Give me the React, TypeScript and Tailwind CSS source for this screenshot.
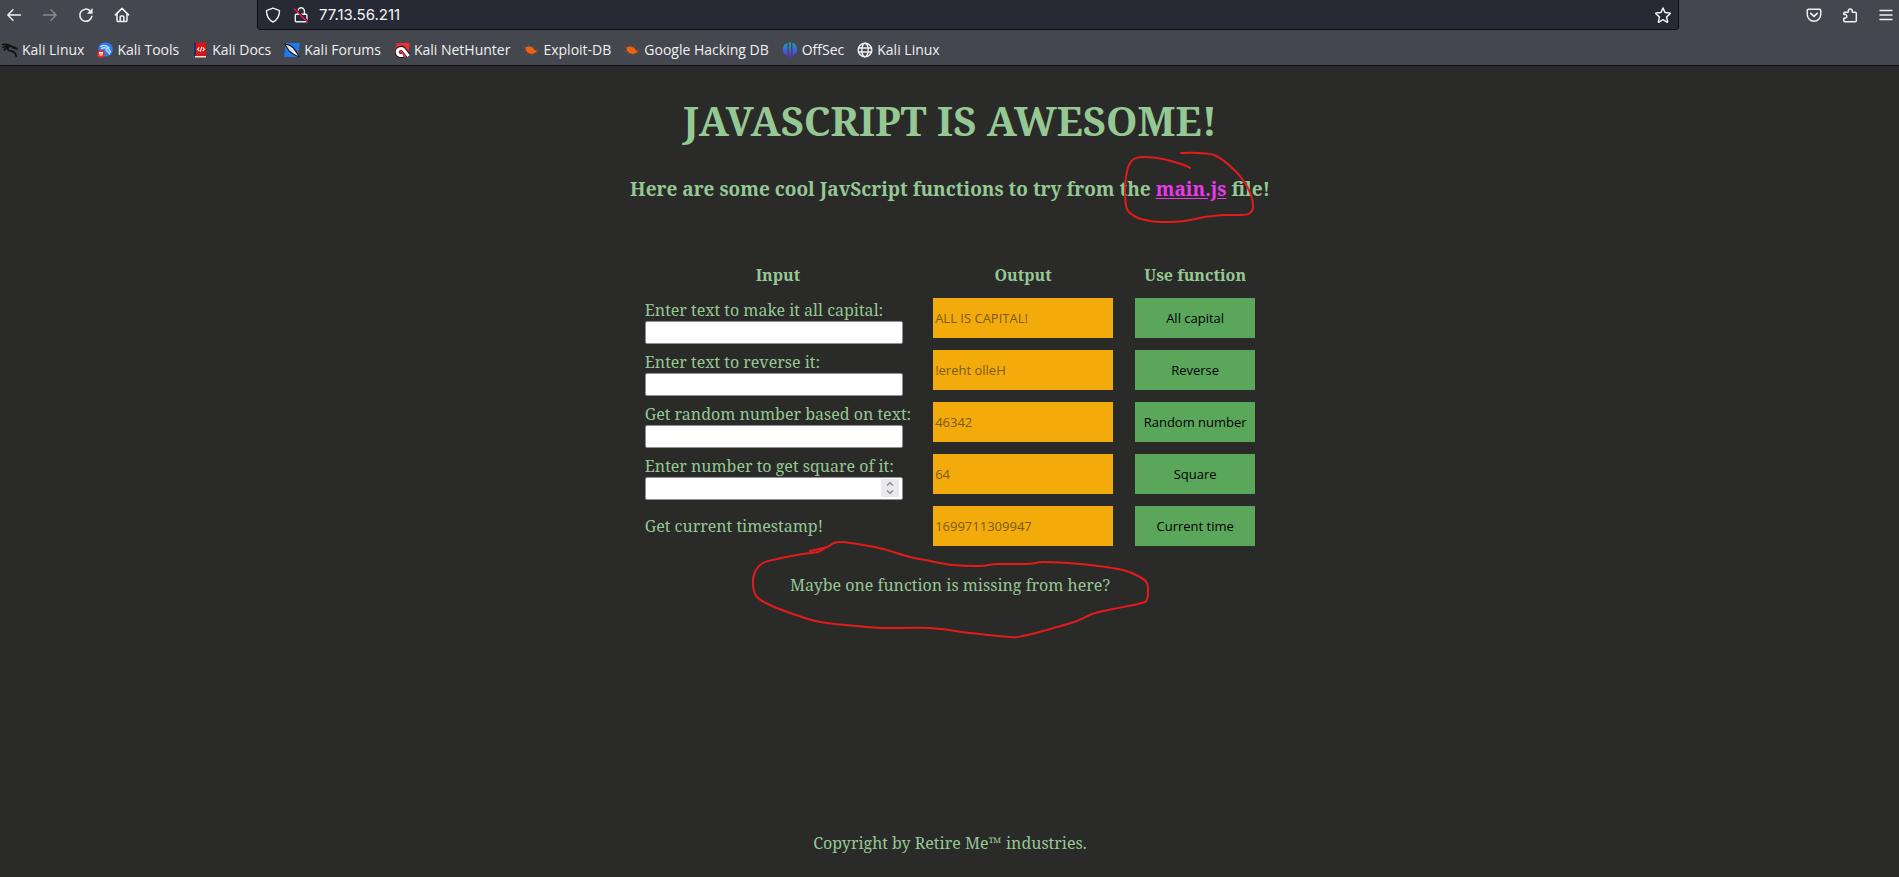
import type { ReactNode } from 'react';

type Point = [number, number];

const stroke = {
  fill: 'none',
  stroke: 'currentColor',
  strokeWidth: 1.4,
  strokeLinecap: 'round' as const,
  strokeLinejoin: 'round' as const,
};

function Icon({ children }: { children: ReactNode }) {
  return (
    <svg viewBox="0 0 16 16" className="size-4 shrink-0" aria-hidden="true">
      {children}
    </svg>
  );
}

const BackIcon = () => (
  <Icon>
    <path {...stroke} d="M14.5 8H1.8M7 2.8 1.8 8 7 13.2" />
  </Icon>
);

const ForwardIcon = () => (
  <Icon>
    <path {...stroke} d="M1.5 8h12.7M9 2.8 14.2 8 9 13.2" />
  </Icon>
);

const ReloadIcon = () => (
  <Icon>
    <path {...stroke} strokeWidth={1.5} d="M13.9 9.2A6.1 6.1 0 1 1 12.2 3.9" />
    <path fill="currentColor" d="M14.6 1v5.3c0 .3-.2.5-.5.5H8.9z" />
  </Icon>
);

const HomeIcon = () => (
  <Icon>
    <path {...stroke} strokeWidth={1.5} d="M1.4 7.9 8 1.4l6.6 6.5M3 6.6v7c0 .6.4 1 1 1h8c.6 0 1-.4 1-1v-7M6.2 14.4V10c0-.5.4-.9.9-.9h1.8c.5 0 .9.4.9.9v4.4" />
  </Icon>
);

const ShieldIcon = () => (
  <Icon>
    <path {...stroke} d="M8 1.2 1.9 3.4c-.3.1-.4.3-.4.6.1 4.6 1.7 8.7 6.5 11 4.8-2.3 6.4-6.4 6.5-11 0-.3-.1-.5-.4-.6z" />
  </Icon>
);

const InsecureLockIcon = () => (
  <Icon>
    <path {...stroke} d="M5 7V4a3.2 3.2 0 0 1 6.4 0v3M3.2 7.2h9.8c.5 0 .9.4.9.9v5.7c0 .5-.4.9-.9.9H3.2c-.5 0-.9-.4-.9-.9V8.100c0-.5.4-.9.9-.9z" />
    <path d="M2.4 1.8 15.2 14.5" stroke="#272935" strokeWidth="1.6" />
    <path d="M1.4 2 14.4 15" stroke="#e8154e" strokeWidth="1.5" strokeLinecap="round" />
  </Icon>
);

const StarIcon = () => (
  <Icon>
    <path {...stroke} strokeWidth={1.5} d="m8 1 2 4.4 4.9.5c.4 0 .5.5.2.8l-3.5 3.2 1 4.7c.1.4-.3.7-.6.5L8 12.7l-4 2.4c-.3.2-.7-.1-.6-.5l1-4.7L.9 6.7c-.3-.3-.2-.8.2-.8L6 5.4z" />
  </Icon>
);

const PocketIcon = () => (
  <Icon>
    <path {...stroke} strokeWidth={1.5} d="M2.5 2.300h11c.7 0 1.2.5 1.2 1.2v4A6.7 6.7 0 0 1 8 14.2 6.7 6.7 0 0 1 1.3 7.5v-4c0-.7.5-1.2 1.2-1.2z" />
    <path {...stroke} strokeWidth={1.7} d="M4.8 6.3 8 9.3l3.2-3" />
  </Icon>
);

const ExtensionIcon = () => (
  <Icon>
    <path {...stroke} strokeWidth={1.5} d="M2.8 5.2h3c.4 0 .7-.3.6-.7a2 2 0 1 1 3.8 0c-.1.4.1.7.5.7h2.6c.6 0 1 .4 1 1v7.600c0 .6-.4 1-1 1H2.800c-.6 0-1-.4-1-1v-2.200c0-.4.3-.6.7-.5a1.900 1.900 0 1 0 0-3.700c-.4.1-.7-.1-.7-.5v-.7c0-.6.4-1 1-1z" />
  </Icon>
);

const MenuIcon = () => (
  <Icon>
    <path {...stroke} d="M2 3.5h12M2 8h12M2 12.5h12" />
  </Icon>
);

const KaliIcon = () => (
  <Icon>
    <path
      fill="none"
      stroke="#101113"
      strokeWidth="1.7"
      strokeLinecap="round"
      strokeLinejoin="round"
      d="M.8 2.600C4 2.200 7 2.800 9.500 4.400M1 5.600C3.200 4 5.500 3.700 8 4.200M2.500 8C3.500 6.200 5 5.200 6.800 5M9 4.400l3.200.9 2.300 1.500M6.600 5c-1.700 2.200-.2 3.700 2.400 4.100 3 .4 4.700 1.400 5.200 5"
    />
    <path fill="#101113" d="m11 4.200 3.300 1 1.500 2-3.600-.3-2.400-1z" />
  </Icon>
);

const ToolsIcon = () => (
  <Icon>
    <circle cx="8.6" cy="7.4" r="7.2" fill="#2a7bf4" />
    <path fill="none" stroke="#b9dcff" strokeWidth="1.4" strokeLinecap="round" d="M3.5 4.5c3-1.800 6-1 8.500 1.200M4.500 6.500C8 5 12 6 13.600 10M9 7c-1 2 3 2 3.600 5" />
    <circle cx="4" cy="12" r="3.9" fill="#e32b2b" />
    <path fill="none" stroke="#fff" strokeWidth="1.1" d="M2 10.600h4M3.100 10.600v3.200M5 10.600v3.200" />
  </Icon>
);

const DocsIcon = () => (
  <Icon>
    <path fill="#1f3168" d="M2 .5h3V14H2z" />
    <path fill="#d81414" d="M4 .5h10V14H4z" />
    <path fill="#e8e0de" d="M3 14h11v1.500H3z" />
    <path fill="none" stroke="#fff" strokeWidth="1.1" d="M7.300 5.300 5.500 7.200l1.800 1.900M10.700 5.300l1.800 1.900-1.800 1.900M9.700 4.800 8.400 9.600" />
  </Icon>
);

const ForumsIcon = () => (
  <Icon>
    <path fill="#2079ee" d="M2 1h14l-2.500 14H0z" />
    <path fill="#16191f" d="M0 1.500 5.500 2.600l4 2.400 3 4L16 15.500l-6-2.300-5-3.400z" />
    <path fill="#f3f5f7" d="M1.800 2.800 5.500 4l3 2 2.800 3.700 3 4.300-4.100-2L5.600 8.600z" />
    <path fill="none" stroke="#8d97a3" strokeWidth=".7" d="M4 4.500 9 9.500" />
  </Icon>
);

const NetHunterIcon = () => (
  <Icon>
    <path fill="#ee2c35" d="M3 1h13l-2 12-5 3-6-1-3-5z" />
    <path fill="none" stroke="#15161a" strokeWidth="4.600" d="M14.500 13.500 9.500 7C7 5 3 7 3 10c0 3.500 3.500 4.500 6 3.500" />
    <path fill="none" stroke="#fff" strokeWidth="3" d="M14.500 14 9.500 7.500C7 5.500 3.200 7 3.200 10c0 3 3.300 4 5.800 3.200" />
  </Icon>
);

const ExploitIcon = () => (
  <Icon>
    <path fill="#ee6112" d="M2.600 5.500c2.400-2 7-.8 9 2.200l3 2.800-2.300-.1c-1.200 1.500-4 1.900-6.200.9C3.500 10.200 2 7.700 2.600 5.500z" />
    <path fill="none" stroke="#ee6112" strokeOpacity=".55" strokeWidth=".6" strokeLinecap="round" d="M3 6 .8 4.400M3.500 8.800 1 9.600M5.500 11 3.300 12.400M8.500 11.500l.5 1.600M6.500 4.800 5.600 3M9.500 6l.8-2M12 8.500l3.200-.6" />
  </Icon>
);

const OffSecIcon = () => (
  <Icon>
    <defs>
      <linearGradient id="offsec" x1="0" y1="0" x2="0" y2="1">
        <stop offset="0" stopColor="#14a9b4" />
        <stop offset=".55" stopColor="#3d62d8" />
        <stop offset="1" stopColor="#6d20cf" />
      </linearGradient>
    </defs>
    <path fill="url(#offsec)" d="M5.500.800v13.200C2.500 13 .8 10.500.8 7.400.8 4.300 2.600 1.700 5.500.800zM7 .3h2v15.400H7zM10.500.800c2.900.900 4.700 3.500 4.700 6.600 0 3.100-1.700 5.600-4.700 6.600z" />
  </Icon>
);

const GlobeIcon = () => (
  <Icon>
    <circle {...stroke} strokeWidth={1.5} cx="8" cy="8" r="6.8" />
    <ellipse {...stroke} cx="8" cy="8" rx="3.2" ry="6.8" />
    <path {...stroke} d="M1.500 6h13M1.500 10h13" />
  </Icon>
);

const bookmarks = [
  { label: 'Kali Linux', icon: <KaliIcon /> },
  { label: 'Kali Tools', icon: <ToolsIcon /> },
  { label: 'Kali Docs', icon: <DocsIcon /> },
  { label: 'Kali Forums', icon: <ForumsIcon /> },
  { label: 'Kali NetHunter', icon: <NetHunterIcon /> },
  { label: 'Exploit-DB', icon: <ExploitIcon /> },
  { label: 'Google Hacking DB', icon: <ExploitIcon /> },
  { label: 'OffSec', icon: <OffSecIcon /> },
  { label: 'Kali Linux', icon: <GlobeIcon /> },
];

function ToolButton({ label, disabled, children }: { label: string; disabled?: boolean; children: ReactNode }) {
  return (
    <button type="button" aria-label={label} disabled={disabled} className="flex size-9 items-center justify-center disabled:opacity-40">
      {children}
    </button>
  );
}

function BrowserChrome() {
  return (
    <header className="border-b border-[#0c0d10] bg-[#44474d] font-['Open_Sans',sans-serif] text-[#f0f0f2]">
      <div className="flex h-[30px]">
        <nav className="flex w-[257px] shrink-0 items-center">
          <div className="-ml-1 flex">
            <ToolButton label="Back"><BackIcon /></ToolButton>
            <ToolButton label="Forward" disabled><ForwardIcon /></ToolButton>
            <ToolButton label="Reload"><ReloadIcon /></ToolButton>
            <ToolButton label="Home"><HomeIcon /></ToolButton>
          </div>
        </nav>
        <div className="flex flex-1 items-center rounded-b-[4px] border border-t-0 border-[#0c0d10] bg-[#272935] px-[7px]">
          <ShieldIcon />
          <span className="ml-3"><InsecureLockIcon /></span>
          <input
            type="text"
            aria-label="Address"
            defaultValue="77.13.56.211"
            className="ml-[10px] min-w-0 flex-1 bg-transparent font-['Inter',sans-serif] text-[15px] leading-5 text-[#f4f4f6] outline-none"
          />
          <button type="button" aria-label="Bookmark this page"><StarIcon /></button>
        </div>
        <div className="flex w-[220px] shrink-0 items-center justify-end">
          <div className="-mr-[5px] flex">
            <ToolButton label="Pocket"><PocketIcon /></ToolButton>
            <ToolButton label="Extensions"><ExtensionIcon /></ToolButton>
            <ToolButton label="Menu"><MenuIcon /></ToolButton>
          </div>
        </div>
      </div>
      <nav className="flex h-[35px] items-center gap-[13px] pt-[5px] pl-[2px]">
        {bookmarks.map(({ label, icon }, i) => (
          <a key={i} href="#" className="flex items-center gap-1 text-sm leading-5 whitespace-nowrap">
            {icon}
            {label}
          </a>
        ))}
      </nav>
    </header>
  );
}

const functions = [
  { id: 'capital', label: 'Enter text to make it all capital:', type: 'text', output: 'ALL IS CAPITAL!', action: 'All capital' },
  { id: 'reverse', label: 'Enter text to reverse it:', type: 'text', output: '!ereht olleH', action: 'Reverse' },
  { id: 'random', label: 'Get random number based on text:', type: 'text', output: '46342', action: 'Random number' },
  { id: 'square', label: 'Enter number to get square of it:', type: 'number', output: '64', action: 'Square' },
  { id: 'time', label: 'Get current timestamp!', type: null, output: '1699711309947', action: 'Current time' },
];

function InputField({ id, type }: { id: string; type: string }) {
  return (
    <div className="relative w-[258px]">
      <input
        id={id}
        type={type}
        className="block h-[23px] w-full appearance-none rounded-[2px] border border-[#8f8f9d] bg-white px-1 text-[13px] text-black [&::-webkit-inner-spin-button]:appearance-none"
      />
      {type === 'number' && (
        <svg viewBox="0 0 18 18" className="pointer-events-none absolute top-[2px] right-1 size-[18px] bg-[#e9e9ed]" aria-hidden="true">
          <path d="M6 6.500 9 3.700l3 2.800M6 11.500l3 2.800 3-2.800" fill="none" stroke="#8a8a96" strokeWidth="1.5" />
        </svg>
      )}
    </div>
  );
}

function FunctionTable() {
  return (
    <table className="mt-[61px] border-collapse text-base leading-6">
      <thead>
        <tr className="h-[29px] align-top">
          <th className="p-0 pr-[22px]">Input</th>
          <th className="p-0 pr-[22px]">Output</th>
          <th className="p-0">Use function</th>
        </tr>
      </thead>
      <tbody>
        {functions.map(({ id, label, type, output, action }) => (
          <tr key={id} className="h-[52px]">
            <td className={type ? 'p-0 pr-[22px] align-bottom' : 'p-0 pr-[22px]'}>
              {type ? (
                <>
                  <label htmlFor={id} className="block leading-[22px] whitespace-nowrap">{label}</label>
                  <InputField id={id} type={type} />
                </>
              ) : (
                label
              )}
            </td>
            <td className="p-0 pr-[22px]">
              <input
                readOnly
                aria-label={`${action} output`}
                value={output}
                className="block h-10 w-[180px] bg-[#f2ab0a] px-[2px] font-['Open_Sans',sans-serif] text-[13px] text-[#7c5a14] outline-none"
              />
            </td>
            <td className="p-0">
              <button type="button" className="block h-10 w-[120px] bg-[#5aa65b] font-['Open_Sans',sans-serif] text-[13px] text-black">
                {action}
              </button>
            </td>
          </tr>
        ))}
      </tbody>
    </table>
  );
}

const linkCircle: Point[] = [
  [1181, 153], [1198, 153], [1214, 155], [1229, 165], [1243, 180], [1251, 195], [1253, 207], [1250, 213], [1242, 215],
  [1224, 215], [1205, 217], [1184, 221], [1167, 222], [1150, 221], [1136, 217], [1127, 209], [1125, 193], [1126, 177],
  [1129, 165], [1134, 159], [1142, 157], [1157, 158], [1171, 161], [1184, 165], [1190, 168],
];

const hintCircle: Point[] = [
  [810, 551], [827, 547], [834, 543], [842, 542], [863, 545], [883, 549], [910, 557], [930, 561], [953, 565], [980, 566],
  [997, 564], [1027, 564], [1043, 562], [1067, 563], [1090, 565], [1123, 570], [1140, 577], [1147, 583], [1148, 592],
  [1147, 599], [1142, 603], [1113, 609], [1092, 614], [1077, 621], [1043, 631], [1023, 636], [1010, 637], [970, 633],
  [930, 628], [883, 628], [857, 626], [820, 622], [793, 614], [770, 605], [757, 597], [753, 585], [755, 572], [763, 563],
  [777, 559], [803, 554], [818, 552], [827, 547],
];

function smoothPath(points: Point[]) {
  let d = `M${points[0][0]} ${points[0][1]}`;
  for (let i = 0; i < points.length - 1; i++) {
    const before = points[Math.max(i - 1, 0)];
    const from = points[i];
    const to = points[i + 1];
    const after = points[Math.min(i + 2, points.length - 1)];
    d += `C${from[0] + (to[0] - before[0]) / 6} ${from[1] + (to[1] - before[1]) / 6} ${to[0] - (after[0] - from[0]) / 6} ${to[1] - (after[1] - from[1]) / 6} ${to[0]} ${to[1]}`;
  }
  return d;
}

function PenMarks() {
  return (
    <svg
      viewBox="630 66 640 600"
      className="pointer-events-none absolute top-0 left-1/2 h-[600px] w-[640px] -translate-x-1/2"
      fill="none"
      stroke="#e21b1b"
      strokeWidth="2"
      strokeLinecap="round"
      aria-hidden="true"
    >
      <path d={smoothPath(linkCircle)} />
      <path d={smoothPath(hintCircle)} />
    </svg>
  );
}

export default function App() {
  return (
    <div className="flex min-h-screen flex-col bg-[#2a2a29]">
      <BrowserChrome />
      <div className="relative flex flex-1 flex-col items-center pl-px font-['Noto_Serif',serif] text-[#95c893]">
        <h1 className="mt-7 text-[40px] leading-[54px] font-bold">JAVASCRIPT IS AWESOME!</h1>
        <h3 className="mt-7 text-[19px] leading-[26px] font-bold">
          Here are some cool JavScript functions to try from the{' '}
          <a href="#main.js" className="text-[#e83ae8] underline underline-offset-2">main.js</a> file!
        </h3>
        <FunctionTable />
        <p className="mt-[21px] text-base leading-6">Maybe one function is missing from here?</p>
        <footer className="mt-auto pb-[22px] text-base leading-6">Copyright by Retire Me™ industries.</footer>
        <PenMarks />
      </div>
    </div>
  );
}
